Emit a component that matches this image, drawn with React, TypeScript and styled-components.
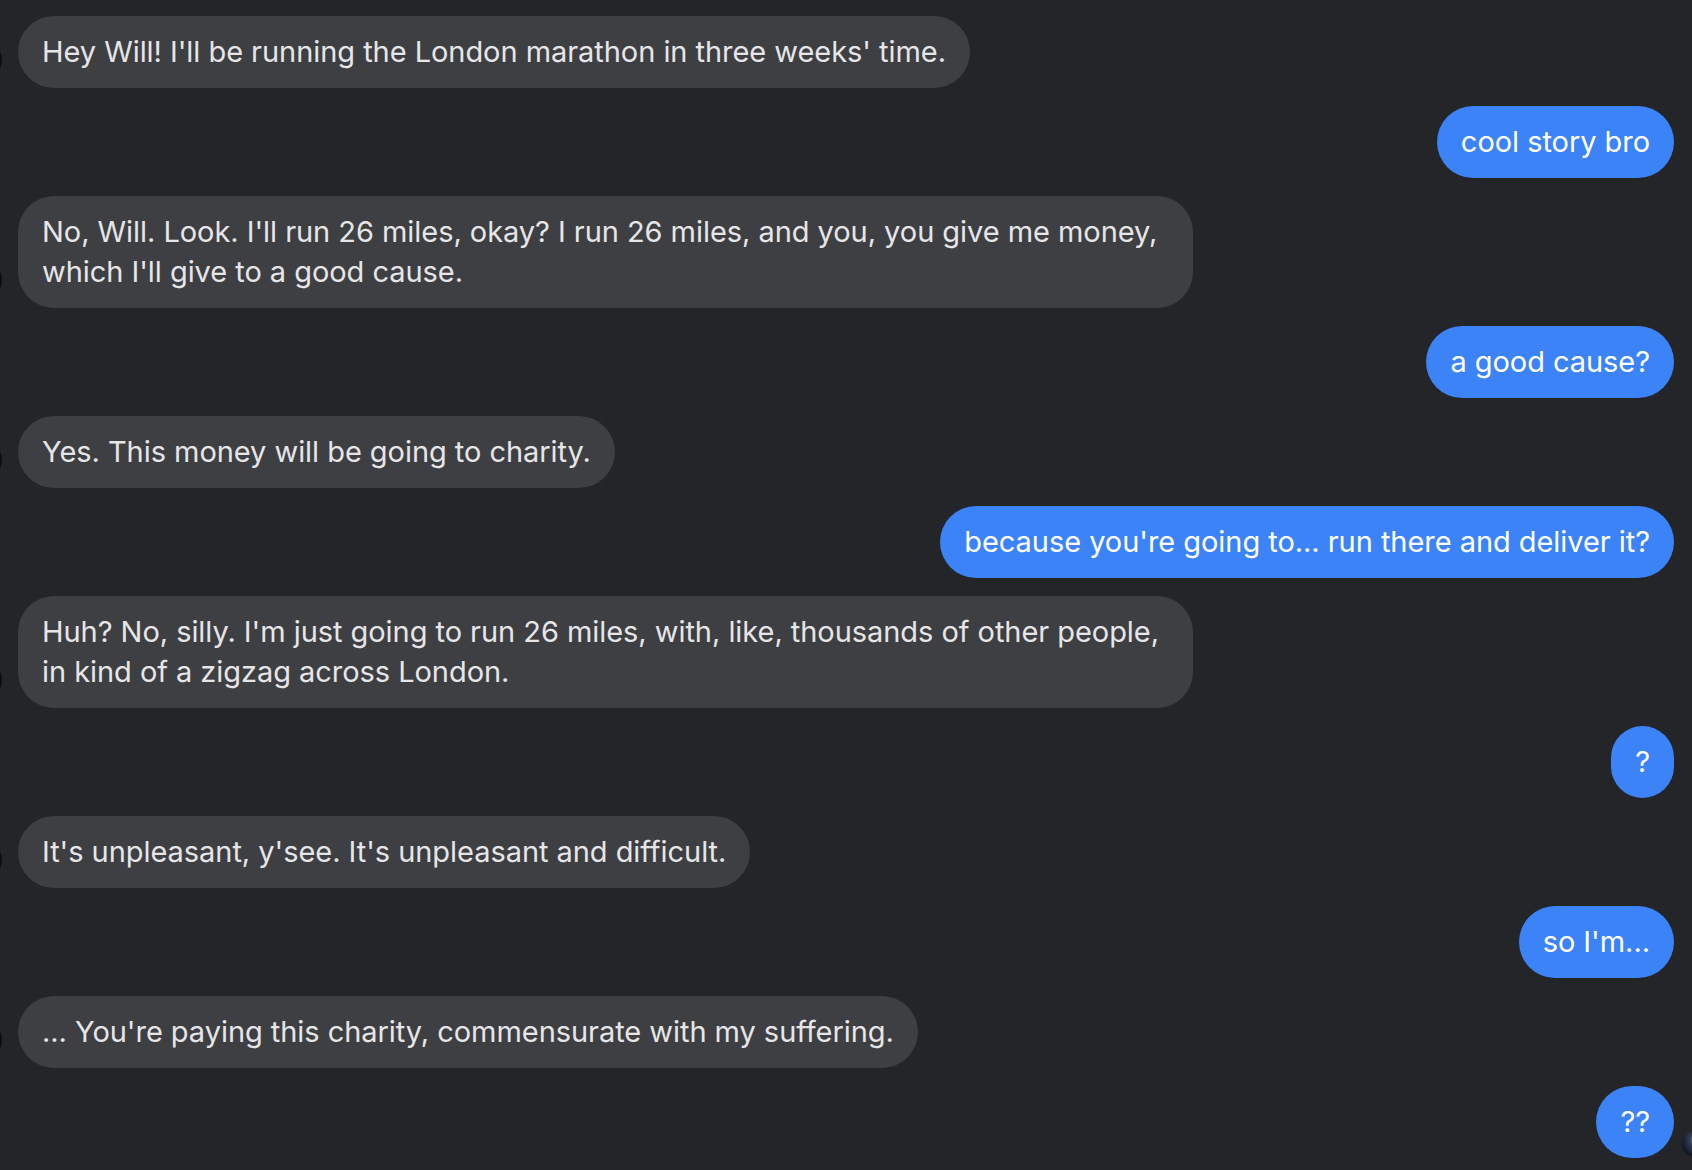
import React from "react";
import styled, { createGlobalStyle } from "styled-components";

const GlobalStyle = createGlobalStyle`
  html, body {
    margin: 0;
    padding: 0;
    background: #242528;
    overflow: hidden;
  }
  body {
    font-family: Inter, "Noto Sans", "Liberation Sans", sans-serif;
  }
`;

type Message = { me?: boolean; text: string };

const messages: Message[] = [
  { text: "Hey Will! I'll be running the London marathon in three weeks' time." },
  { me: true, text: "cool story bro" },
  {
    text: "No, Will. Look. I'll run 26 miles, okay? I run 26 miles, and you, you give me money, which I'll give to a good cause.",
  },
  { me: true, text: "a good cause?" },
  { text: "Yes. This money will be going to charity." },
  { me: true, text: "because you're going to... run there and deliver it?" },
  {
    text: "Huh? No, silly. I'm just going to run 26 miles, with, like, thousands of other people, in kind of a zigzag across London.",
  },
  { me: true, text: "?" },
  { text: "It's unpleasant, y'see. It's unpleasant and difficult." },
  { me: true, text: "so I'm..." },
  { text: "... You're paying this charity, commensurate with my suffering." },
  { me: true, text: "??" },
];

function App() {
  return (
    <Wrap>
      <GlobalStyle />
      {messages.map((m, i) => (
        <Row key={i} $me={!!m.me}>
          {!m.me && <Avatar />}
          <Bubble $me={!!m.me}>{m.text}</Bubble>
          {m.me && i === messages.length - 1 && <SeenAvatar />}
        </Row>
      ))}
    </Wrap>
  );
}

const Wrap = styled.div`
  display: flex;
  flex-direction: column;
  gap: 18px;
  padding: 16px 18px;
  height: 1170px;
  box-sizing: border-box;
`;

const Row = styled.div<{ $me: boolean }>`
  position: relative;
  display: flex;
  justify-content: ${(p) => (p.$me ? "flex-end" : "flex-start")};
`;

const Bubble = styled.div<{ $me: boolean }>`
  max-width: 1175px;
  box-sizing: border-box;
  padding: 16px 24px;
  border-radius: 36px;
  font-size: 29px;
  line-height: 40px;
  letter-spacing: -0.05px;
  background: ${(p) => (p.$me ? "#3b83f6" : "#3e3f42")};
  color: ${(p) => (p.$me ? "#ffffff" : "#e6e6e8")};
`;

const Avatar = styled.div`
  position: absolute;
  left: -52px;
  bottom: 10px;
  width: 36px;
  height: 36px;
  border-radius: 50%;
  background: #0d0d0e;
`;

const SeenAvatar = styled.div`
  position: absolute;
  right: -34px;
  bottom: 1px;
  width: 26px;
  height: 26px;
  border-radius: 50%;
  background: radial-gradient(circle at 60% 35%, #c9ccd6 0 12%, #34415a 30%, #10141d 75%);
`;

export default App;
